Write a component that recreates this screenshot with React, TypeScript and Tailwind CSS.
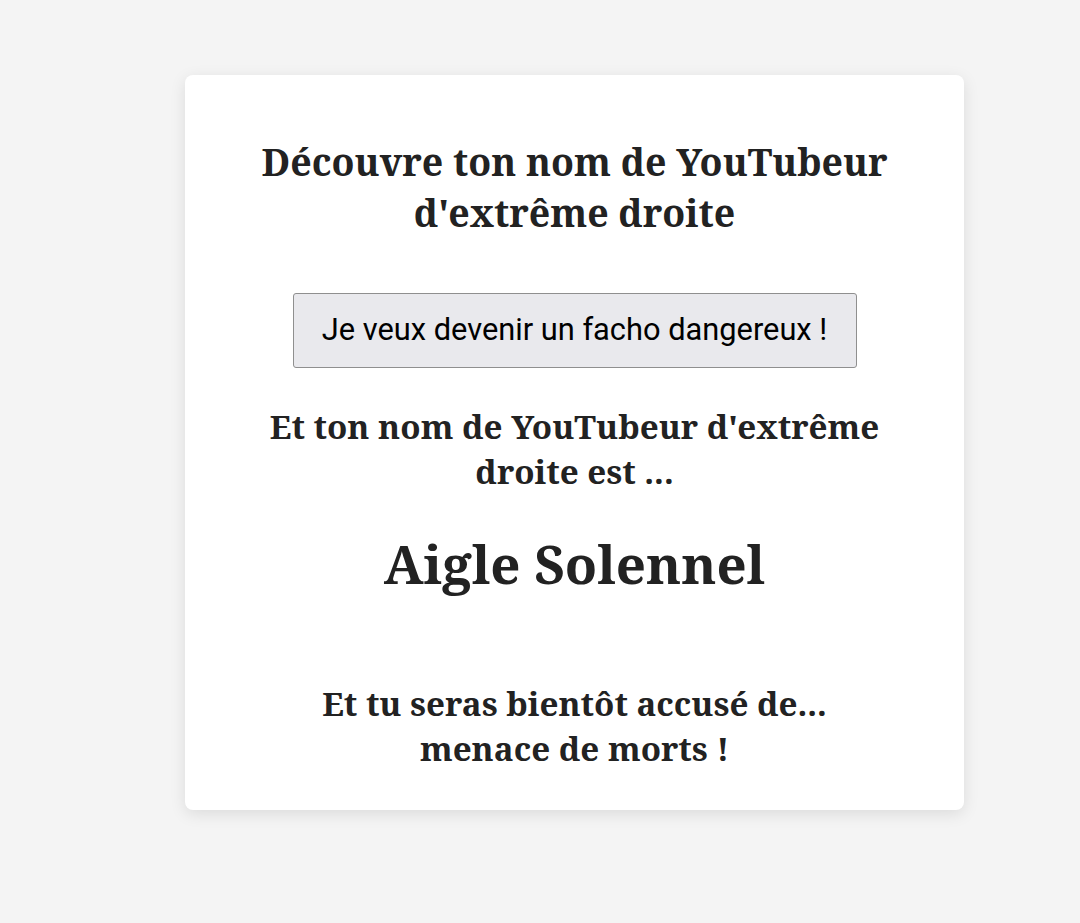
export default function App() {
  return (
    <div className="min-h-[923px] bg-[#f4f4f4] pt-[75px] pb-[113px]">
      <div
        className="ml-[185px] w-[779px] rounded-lg bg-white shadow-[0_4px_16px_rgba(0,0,0,0.1)] px-8 pt-[61px] pb-[39px] text-center text-[#222]"
        style={{ fontFamily: '"Noto Serif", "DejaVu Serif", serif' }}
      >
        <h1 className="text-[37.5px] font-bold leading-[51px]">
          Découvre ton nom de YouTubeur
          <br />
          d'extrême droite
        </h1>

        <div className="mt-[55px] flex justify-center">
          <button
            className="h-[75px] w-[564px] rounded-[3px] border border-[#8f8f8f] bg-[#e9e9ed] text-[30.8px] text-black"
            style={{ fontFamily: 'Roboto, "Noto Sans", sans-serif' }}
          >
            Je veux devenir un facho dangereux !
          </button>
        </div>

        <h2 className="mx-auto mt-[36px] max-w-[640px] text-[33.2px] font-bold leading-[45px]">
          Et ton nom de YouTubeur d'extrême droite est ...
        </h2>

        <p className="mt-[35px] text-[52.8px] font-bold leading-[70px]">Aigle Solennel</p>

        <h3 className="mt-[82px] text-[33.2px] font-bold leading-[45px]">
          Et tu seras bientôt accusé de...
          <br />
          menace de morts !
        </h3>
      </div>
    </div>
  );
}
